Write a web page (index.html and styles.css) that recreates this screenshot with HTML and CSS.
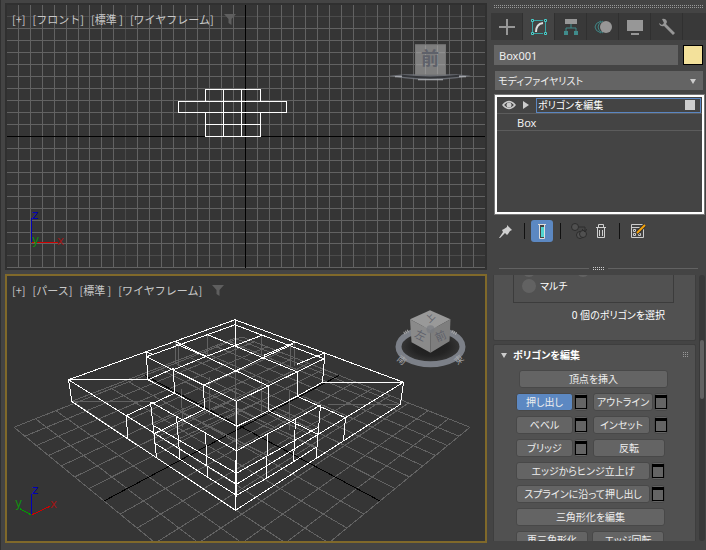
FILE: index.html
```html
<!DOCTYPE html>
<html lang="ja">
<head>
<meta charset="utf-8">
<title>Box001</title>
<link rel="stylesheet" href="styles.css">
</head>
<body>
<div class="app">
  <main class="views">
    <section class="view">
      <svg class="scene" viewBox="7 5 478 263" aria-hidden="true">
        <g id="front-grid" class="crisp"></g>
        <g class="wire crisp">
          <path d="M205.500 89.500H260.500V101.500H286.500V112.500H260.500V136.500H205.500V112.500H178.500V101.500H205.500ZM205.500 101.500H260.500M205.500 112.500H260.500M205.500 124.500H260.500M223.500 89.500V136.500M241.500 89.500V136.500"/>
        </g>
        <g>
          <path d="M389 75.500L404 74H457L471 75.500L457 78Q430 81 404 78Z" fill="#777b82" opacity=".8"/>
          <path d="M402 75.500Q430 79 459 75.500" fill="none" stroke="#34363a" stroke-width="2"/>
          <path d="M395 76.500H402M459 76.500H466M418 79.500H443" stroke="#b5b7bc"/>
          <rect x="415.500" y="44.500" width="30" height="30" fill="#8b8b8b" fill-opacity=".86" stroke="#777"/>
          <path d="M425.500 45V74M437.500 45V74M416 52.500H445M416 64.500H445" stroke="#999" opacity=".6"/>
          <text class="cube-text" x="421" y="65" font-size="18">前</text>
        </g>
        <g class="axis crisp">
          <path d="M31.500 242V218" stroke="#0000b8"/><path d="M32 242.500H58" stroke="#d00000"/>
        </g>
        <g class="axis-text"><text x="32" y="219" fill="#0000b8">z</text><text x="32" y="244" fill="#109010">y</text><text x="57" y="245" fill="#9d1515">x</text></g>
      </svg>
      <div class="view-label"><span>[+]</span><span>[フロント]</span><span>[標準 ]</span><span>[ワイヤフレーム]</span>
        <svg class="funnel" viewBox="0 0 14 13"><path d="M1 1H13L8.500 6V12L5.500 10V6Z"/></svg></div>
    </section>
    <section class="view view-active">
      <svg class="scene" viewBox="7 276 478 264" aria-hidden="true">
        <g id="persp-grid" class="crisp"></g>
        <g class="hidden-wire crisp">
          <path d="M72 401H150M328 404H400M72 401L235 338L400 404M235 338V425M175 341V363M178 344V366M207 334V355M235 320V400M261 335V356M290 345V368M294 343V366M181 388L183 427M209 377V415M261 377V416M289 390V430M153 425L235 388L318 427M153 435L235 398L318 438M155 443L235 408L316 447M181 412L267 455M209 400L295 440M290 412L207 455M262 400L180 438"/>
        </g>
        <g class="wire crisp">
          <path d="M68.500 379.500L235 319.500L403.500 382L400.500 404L235.500 510L72 401.500L68.500 379.500L236.500 484L403.500 382"/>
          <path d="M68.500 379.500H148M322 382.500H403M126 415.500L174.500 393M126 415.500L128 438.500M154 433.500L156.500 457M154 433.500L204.500 409M297 396L345.500 417.500L343.500 441M268.500 410.500L318 434L316 459"/>
          <path d="M146.500 356.500L235 324.500L324 358.500L236.500 401ZM148 379.500L174.500 393L204.500 409L237 426L268.500 410.500L297 396L322.500 382"/>
          <path d="M146.500 351.500V357L148 379.500M173.500 369.500L174.500 393M203.500 385L204.500 409M236.500 401V497M268.500 386V410.500M297 371.500V396M324.500 353V358.500L322.500 382M235.500 460V510M235 320V345"/>
          <path d="M206.500 334L234.500 345.500L264 358L297 371.500M176.500 344L204 355.500L236 370.500L268.500 386M262 335L234.500 345.500L204 357L173.500 369.500M293 344L264 357L236 370.500L203.500 385"/>
          <path d="M175 341L206 356M295 342L264 355M146.500 351.500L152 354M324 353L297 364M148 379.500L174 368"/>
          <path d="M150.500 401.500L177 416.500L206 433L236.500 450.500L267 434L295 419L320.500 405M153 425L236.500 473L318 427M155 443L180 459L207 476.500L236.500 495L266.500 478L293.500 461.500L316 447"/>
          <path d="M150.500 401.500L156.500 457M176.500 416.500L180 459M205.500 433L207.500 476.500M320.500 405L316 459M295.500 419L293.500 461.500M267.500 434L266.500 478"/>
        </g>
        <g>
          <defs><radialGradient id="shade"><stop offset="0" stop-color="#1d1d1d"/><stop offset=".6" stop-color="#242424"/><stop offset="1" stop-color="#353535"/></radialGradient></defs>
          <ellipse cx="430.500" cy="346" rx="29" ry="16" fill="url(#shade)"/>
          <ellipse cx="430.500" cy="346.500" rx="32" ry="17.500" fill="none" stroke="#7c8088" stroke-width="6"/>
          <g class="compass"><text x="398" y="363" transform="rotate(40 402 359)">南</text><text x="454" y="363" transform="rotate(-40 458 359)">東</text></g>
          <path d="M404 333L409 330M452 331L457 334" stroke="#aaa" stroke-width="3" stroke-dasharray="1 1"/>
          <path d="M430 310L450.500 319L430.500 330L410 319Z" fill="#999"/>
          <path d="M410 319L430.500 330V352.500L411.500 342Z" fill="#8a8a8a"/>
          <path d="M450.500 319L430.500 330V352.500L449.500 341Z" fill="#7e7e7e"/>
          <circle cx="430.500" cy="329" r="4" fill="#777b80" opacity=".7"/>
          <text class="cube-text cube-text-small" x="415" y="339" font-size="11" transform="rotate(25 420 335)">左</text>
          <text class="cube-text cube-text-small" x="435" y="340" font-size="11" transform="rotate(-25 440 336)">前</text>
          <text class="cube-text cube-text-small" x="426" y="321" font-size="9" transform="rotate(-45 430 318)">上</text>
        </g>
        <g class="axis crisp">
          <path d="M31.500 514V494" stroke="#0000b8"/><path d="M32 514.500L50 506" stroke="#d00000"/><path d="M31 514.500L20 508.500" stroke="#00a000"/>
        </g>
        <g class="axis-text"><text x="32" y="494" fill="#0000b8">z</text><text x="15" y="507" fill="#109010">y</text><text x="50" y="508" fill="#9d1515">x</text></g>
      </svg>
      <div class="view-label"><span>[+]</span><span>[パース]</span><span>[標準 ]</span><span>[ワイヤフレーム]</span>
        <svg class="funnel" viewBox="0 0 14 13"><path d="M1 1H13L8.500 6V12L5.500 10V6Z"/></svg></div>
    </section>
  </main>

  <aside class="panel">
    <div class="drag-dots"></div>
    <nav class="tabs">
      <button class="tab" aria-label="作成"><svg viewBox="0 0 20 18"><path d="M2 9H18M10 1V17" stroke="#979797" stroke-width="2"/></svg></button>
      <button class="tab tab-on" aria-label="修正"><svg viewBox="0 0 20 18"><path d="M5 2.500H14M5 15.500H14M3.500 4V14M16.500 4V14" stroke="#3aa5a5"/><g fill="#333" stroke="#48d0cc"><path d="M2.500 1.500H4.500V3.500H2.500ZM15.500 1.500H17.500V3.500H15.500ZM2.500 14.500H4.500V16.500H2.500ZM15.500 14.500H17.500V16.500H15.500Z"/></g><path d="M7 14Q7 6 14 5" fill="none" stroke="#ddd" stroke-width="2"/></svg></button>
      <button class="tab" aria-label="階層"><svg viewBox="0 0 20 18"><path d="M4 1H16V6H4Z" fill="#979797"/><path d="M10 6V10M5 14V10H15V14" fill="none" stroke="#408c8c"/><path d="M3 13H7V17H3ZM13 13H17V17H13Z" fill="#408c8c"/></svg></button>
      <button class="tab" aria-label="モーション"><svg viewBox="0 0 20 18"><g fill="none" stroke="#3f8787"><path d="M8 3Q2 5 2 9T8 15"/><path d="M10 3Q5 5 5 9T10 15"/></g><circle cx="13" cy="9" r="6" fill="#979797"/></svg></button>
      <button class="tab" aria-label="表示"><svg viewBox="0 0 20 18"><path d="M2 2H18V13H2ZM6 15H14V17H6Z" fill="#979797"/></svg></button>
      <button class="tab" aria-label="ユーティリティ"><svg viewBox="0 0 20 18"><path d="M5 1Q9 0 10 4L9 6L18 15L16 17L7 8Q3 9 2 5L5 7L7 5Z" fill="#979797"/></svg></button>
    </nav>
    <div class="name-row"><input class="name" aria-label="名前" value="Box001"><button class="swatch" aria-label="カラー"></button></div>
    <div class="select-wrap"><select class="modifiers" aria-label="モディファイヤ"><option>モディファイヤリスト</option></select></div>
    <div class="stack">
      <div class="stack-row">
        <button class="eye" aria-label="表示切替"><svg viewBox="0 0 14 10"><path d="M1 5Q7-2 13 5Q7 12 1 5Z" fill="none" stroke="#ccc" stroke-width="1.500"/><circle cx="7" cy="5" r="2.500" fill="#ccc"/></svg></button>
        <button class="expand" aria-label="展開"></button>
        <label class="stack-name"><span>ポリゴンを編集</span><input class="stack-check" type="checkbox"></label>
      </div>
      <div class="stack-row stack-base">Box</div>
    </div>
    <div class="tools">
      <button class="tool" aria-label="固定"><svg viewBox="0 0 16 16"><path d="M9 2L14 7L12 8L10 11L9 12L7 10L2 15L1 15L5 9L4 7L6 6L9 4Z" fill="#d0d0d0"/></svg></button>
      <i class="bar"></i>
      <button class="tool tool-on" aria-label="最終結果"><svg viewBox="0 0 16 16"><path d="M4 1.500H12M5.500 2V15.500H10.500V2" fill="#444" stroke="#ddd"/><path d="M7 4H10V14H7Z" fill="#50d5d0"/></svg></button>
      <i class="bar"></i>
      <button class="tool tool-gap" aria-label="固有にする"><svg viewBox="0 0 16 16"><g fill="#505050" stroke="#2c2c2c"><circle cx="4" cy="4" r="3.500"/><circle cx="9" cy="12" r="3.500"/><circle cx="12" cy="11" r="3.500"/></g><path d="M8 4H14V8M11 6L14 9L16 6" fill="none" stroke="#2c2c2c"/></svg></button>
      <button class="tool" aria-label="削除"><svg viewBox="0 0 16 16"><path d="M3 4.500H13M5.500 4V1.500H10.500V4M4.500 5V14.500H11.500V5M6.500 7V13M9.500 7V13" fill="none" stroke="#d0d0d0"/></svg></button>
      <i class="bar"></i>
      <button class="tool tool-gap" aria-label="設定"><svg viewBox="0 0 16 16"><path d="M1.500 1.500H13.500V14.500H1.500ZM2 4.500H13M3.500 6.500H5.500V8.500H3.500ZM8.500 6.500H10.500V8.500H8.500ZM3.500 10.500H5.500V12.500H3.500ZM8.500 10.500H10.500V12.500H8.500Z" fill="none" stroke="#ccc"/><path d="M7 10L15 2" stroke="#333" stroke-width="4"/><path d="M7 10L15 2" stroke="#f5a20a" stroke-width="2"/></svg></button>
    </div>
    <div class="splitter"><i class="grip"></i></div>
    <div class="rollouts">
      <div class="rollout-list">
        <section class="rollout selection">
          <fieldset class="preview">
            <label class="radio"><input type="radio" name="preview"></label>
            <label class="radio"><input type="radio" name="preview">サブオブジェクト</label>
            <label class="radio"><input type="radio" name="preview">マルチ</label>
          </fieldset>
          <p class="count">0 個のポリゴンを選択</p>
        </section>
        <section class="rollout edit">
          <h2 class="rollout-title"><i class="arrow"></i>ポリゴンを編集<i class="dots"></i></h2>
          <div class="buttons">
            <div class="row row-inset"><button class="btn w-full">頂点を挿入</button></div>
            <div class="row"><button class="btn btn-on w-half">押し出し</button><button class="mini" aria-label="押し出し設定"></button><button class="btn w-outline second">アウトライン</button><button class="mini" aria-label="アウトライン設定"></button></div>
            <div class="row"><button class="btn w-half">ベベル</button><button class="mini" aria-label="ベベル設定"></button><button class="btn w-half second">インセット</button><button class="mini mini-far" aria-label="インセット設定"></button></div>
            <div class="row"><button class="btn w-half">ブリッジ</button><button class="mini" aria-label="ブリッジ設定"></button><button class="btn w-mid second">反転</button></div>
            <div class="row"><button class="btn w-long">エッジからヒンジ立上げ</button><button class="mini" aria-label="ヒンジ設定"></button></div>
            <div class="row"><button class="btn w-long">スプラインに沿って押し出し</button><button class="mini" aria-label="スプライン設定"></button></div>
            <div class="row"><button class="btn w-full">三角形化を編集</button></div>
            <div class="row row-pair"><button class="btn w-mid">再三角形化</button><button class="btn w-mid">エッジ回転</button></div>
          </div>
        </section>
      </div>
      <div class="scrollbar"><i class="thumb"></i></div>
    </div>
  </aside>
</div>
<script src="grid.js"></script>
</body>
</html>
```
FILE: styles.css
```css
* { box-sizing: border-box; }
body {
  margin: 0;
  background: #444;
  color: #eee;
  font: 11px/16px "Noto Sans", "Noto Sans CJK JP", sans-serif;
}
button, input, select { font: inherit; color: inherit; }
button { padding: 0; border: 0; background: none; }
.app {
  display: grid;
  grid-template-columns: minmax(0, 1fr) 216px;
  gap: 3px;
  min-height: 100vh;
  border-left: 1px solid #303030;
  border-bottom: 1px solid #303030;
}
.views {
  display: grid;
  grid-template-rows: 267fr 268fr;
  gap: 4px;
  padding: 3px 0 7px 4px;
}
.view {
  position: relative;
  border: 2px solid #303030;
  background: #353535;
  overflow: hidden;
}
.view-active { border-color: #80692a; }
.scene { position: absolute; inset: 0; width: 100%; height: 100%; }
.crisp { shape-rendering: crispEdges; }
.wire, .hidden-wire, .axis { fill: none; stroke-width: 1; }
.wire { stroke: #fff; }
.hidden-wire { stroke: #626262; }
.line { stroke: #626262; }
.line-dim { stroke: #4b4b4b; }
.line-origin { stroke: #000; }
.axis-text { font: 12px "DejaVu Sans", sans-serif; }
.cube-text { fill: #5e616a; font-family: "Noto Sans CJK JP", sans-serif; font-weight: 700; }
.cube-text-small { font-weight: 400; }
.compass { fill: #a5a7aa; font: 9px "Noto Sans CJK JP", sans-serif; }
.view-label {
  position: relative;
  display: flex;
  gap: 7px;
  padding: 6px 5px;
  color: #c8c8c8;
  white-space: pre;
  font-family: "Noto Sans CJK JP", sans-serif;
}
.funnel { width: 14px; height: 13px; margin: 2px 0 0 2px; fill: #5e5e5e; }

.panel {
  display: flex;
  flex-direction: column;
  height: 100vh;
  min-height: 0;
  padding: 5px 0 9px 1px;
  font-size: 10px;
  font-feature-settings: "palt";
}
.drag-dots {
  height: 3px;
  margin: 0 2px;
  background: conic-gradient(#999 25%, transparent 0) 0 0 / 2px 2px;
}
.tabs { display: flex; margin-top: 5px; background: #393939; }
.tab {
  display: grid;
  place-items: center;
  width: 32px;
  height: 27px;
  border-right: 1px solid #303030;
}
.tab svg { width: 20px; height: 18px; }
.tab-on { background: #444; }
.name-row { display: flex; gap: 5px; margin: 5px 3px 0; }
.name {
  flex: 1;
  min-width: 0;
  height: 20px;
  padding: 0 5px;
  border: 0;
  background: #646464;
  font-size: 11px;
}
.swatch { width: 20px; height: 20px; border: 1px solid #000; background: #f3e19b; }
.select-wrap { position: relative; margin: 6px 3px 0 4px; }
.select-wrap::after {
  content: "";
  position: absolute;
  right: 7px;
  top: 8px;
  border: 3px solid transparent;
  border-top: 5px solid #ccc;
  border-bottom: 0;
}
.modifiers {
  display: block;
  width: 100%;
  height: 19px;
  padding: 0 3px;
  border: 0;
  background: #646464;
  appearance: none;
}
.stack {
  height: 119px;
  margin: 5px 2px 0 4px;
  border: 2px solid #fff;
  outline: 1px solid #777;
}
.stack-row { display: flex; align-items: center; height: 17px; border-bottom: 1px solid #5c5c5c; }
.eye { width: 14px; height: 10px; margin-left: 5px; }
.eye svg { display: block; }
.expand { width: 6px; height: 8px; margin: 0 7px; border: 4px solid transparent; border-left: 6px solid #ccc; border-right: 0; }
.stack-name {
  display: flex;
  flex: 1;
  align-items: center;
  justify-content: space-between;
  height: 15px;
  margin-right: 1px;
  padding: 0 5px 0 1px;
  border: 1px solid #5a86c2;
  color: #fff;
  line-height: 13px;
}
.stack-check { width: 10px; height: 10px; margin: 0; appearance: none; background: #ccc; }
.stack-base { padding: 1px 0 0 20px; font-size: 11px; }
.tools { display: flex; align-items: center; height: 22px; margin: 6px 4px 0; }
.tool { display: grid; place-items: center; width: 22px; height: 22px; }
.tool svg { width: 16px; height: 16px; }
.tool-on { border-radius: 3px; background: #5c88c2; }
.tool-gap { margin-left: 1px; }
.bar { width: 1px; height: 16px; margin: 0 6px 0 7px; background: #111; }
.splitter {
  display: flex;
  align-items: center;
  gap: 3px;
  height: 3px;
  margin: 25px 8px 0;
}
.splitter::before, .splitter::after { content: ""; flex: 1; height: 1px; background: #626262; }
.grip { width: 13px; height: 3px; background: conic-gradient(#ccc 25%, transparent 0) 0 0 / 2px 2px; }
.rollouts { display: flex; flex: 1; gap: 3px; min-height: 0; margin: 5px 1px 0 2px; }
.rollout-list { flex: 1; overflow: hidden; }
.rollout { border: 1px solid #3e3e3e; border-radius: 2px; background: #515151; }
.selection { height: 80px; margin-top: -14px; }
.preview {
  display: grid;
  grid-template-columns: 54px 1fr;
  align-content: start;
  height: 41px;
  margin: 0 22px 0 19px;
  padding: 0 8px;
  border: 1px solid #3c3c3c;
  border-top: 0;
}
.radio { display: flex; align-items: center; gap: 4px; height: 16px; color: #fff; white-space: nowrap; }
.radio input { flex: none; width: 14px; height: 14px; margin: 0; border-radius: 50%; appearance: none; background: #626262; }
.count { margin: 4px 30px 0; color: #fff; text-align: right; }
.edit { margin-top: 3px; }
.rollout-title {
  display: flex;
  align-items: center;
  height: 20px;
  margin: 0;
  padding: 0 7px;
  font-size: 10px;
  color: #fff;
}
.arrow { margin-right: 6px; border: 3px solid transparent; border-top: 5px solid #ccc; border-bottom: 0; }
.dots { width: 6px; height: 6px; margin-left: auto; background: conic-gradient(#999 25%, transparent 0) 0 0 / 2px 2px; }
.buttons { display: grid; gap: 5px; padding: 5px 0 6px 22px; }
.row { display: flex; gap: 1px; }
.row-inset { padding-left: 3px; }
.row-pair { gap: 4px; }
.btn, .mini {
  height: 18px;
  border: 1px solid #484848;
  border-radius: 3px;
  background: #646464;
  line-height: 16px;
  white-space: nowrap;
}
.btn-on { background: #5c88c2; }
.w-full { width: 149px; }
.w-half { width: 57px; }
.w-outline { width: 60px; }
.w-mid { width: 72px; }
.w-long { width: 134px; }
.second { margin-left: 4px; }
.mini { display: grid; place-items: center; width: 14px; }
.mini::before { content: ""; width: 10px; height: 10px; border: 1px solid #000; border-top-width: 3px; }
.mini-far { margin-left: 3px; }
.scrollbar { width: 6px; padding-top: 65px; border-radius: 3px; background: #393939; }
.thumb { display: block; height: 59px; margin: 0 1px; border-radius: 2px; background: #626262; }
```
FILE: grid.js
```js
const NS = "http://www.w3.org/2000/svg";

function addLine(group, a, b, name) {
  const line = document.createElementNS(NS, "line");
  line.setAttribute("x1", a[0]);
  line.setAttribute("y1", a[1]);
  line.setAttribute("x2", b[0]);
  line.setAttribute("y2", b[1]);
  line.setAttribute("class", name);
  group.append(line);
}

function lineClass(i) {
  if (i === 0) return "line-origin";
  return i % 10 === 0 ? "line-dim" : "line";
}

// Orthographic grid: the two origin lines are drawn last, on top.
const front = document.getElementById("front-grid");
const order = [];
for (let i = -20; i <= 20; i++) {
  if (i % 10 === 0) order.unshift(i); else order.push(i);
}
order.splice(order.indexOf(0), 1);
order.push(0);
for (const i of order) {
  const x = Math.floor(245.6 + i * 11.97) + 0.5;
  const y = Math.floor(136.4 + i * 11.95) + 0.5;
  addLine(front, [x, 5], [x, 268], lineClass(i));
  if (y > 5 && y < 268) addLine(front, [7, y], [485, y], lineClass(i));
}

// Ground plane seen in perspective, 14 cells on each side.
function project(u, v) {
  const w = 1 - 0.02485 * (u + v);
  return [242 + 16.286 * (u - v) / w, 77 + 350 / w];
}
const ground = document.getElementById("persp-grid");
for (const i of [-7, -6, -5, -4, -3, -2, -1, 1, 2, 3, 4, 5, 6, 7, 0]) {
  const name = i === 0 ? "line-origin" : "line";
  addLine(ground, project(i, -7), project(i, 7), name);
  addLine(ground, project(-7, i), project(7, i), name);
}
```
